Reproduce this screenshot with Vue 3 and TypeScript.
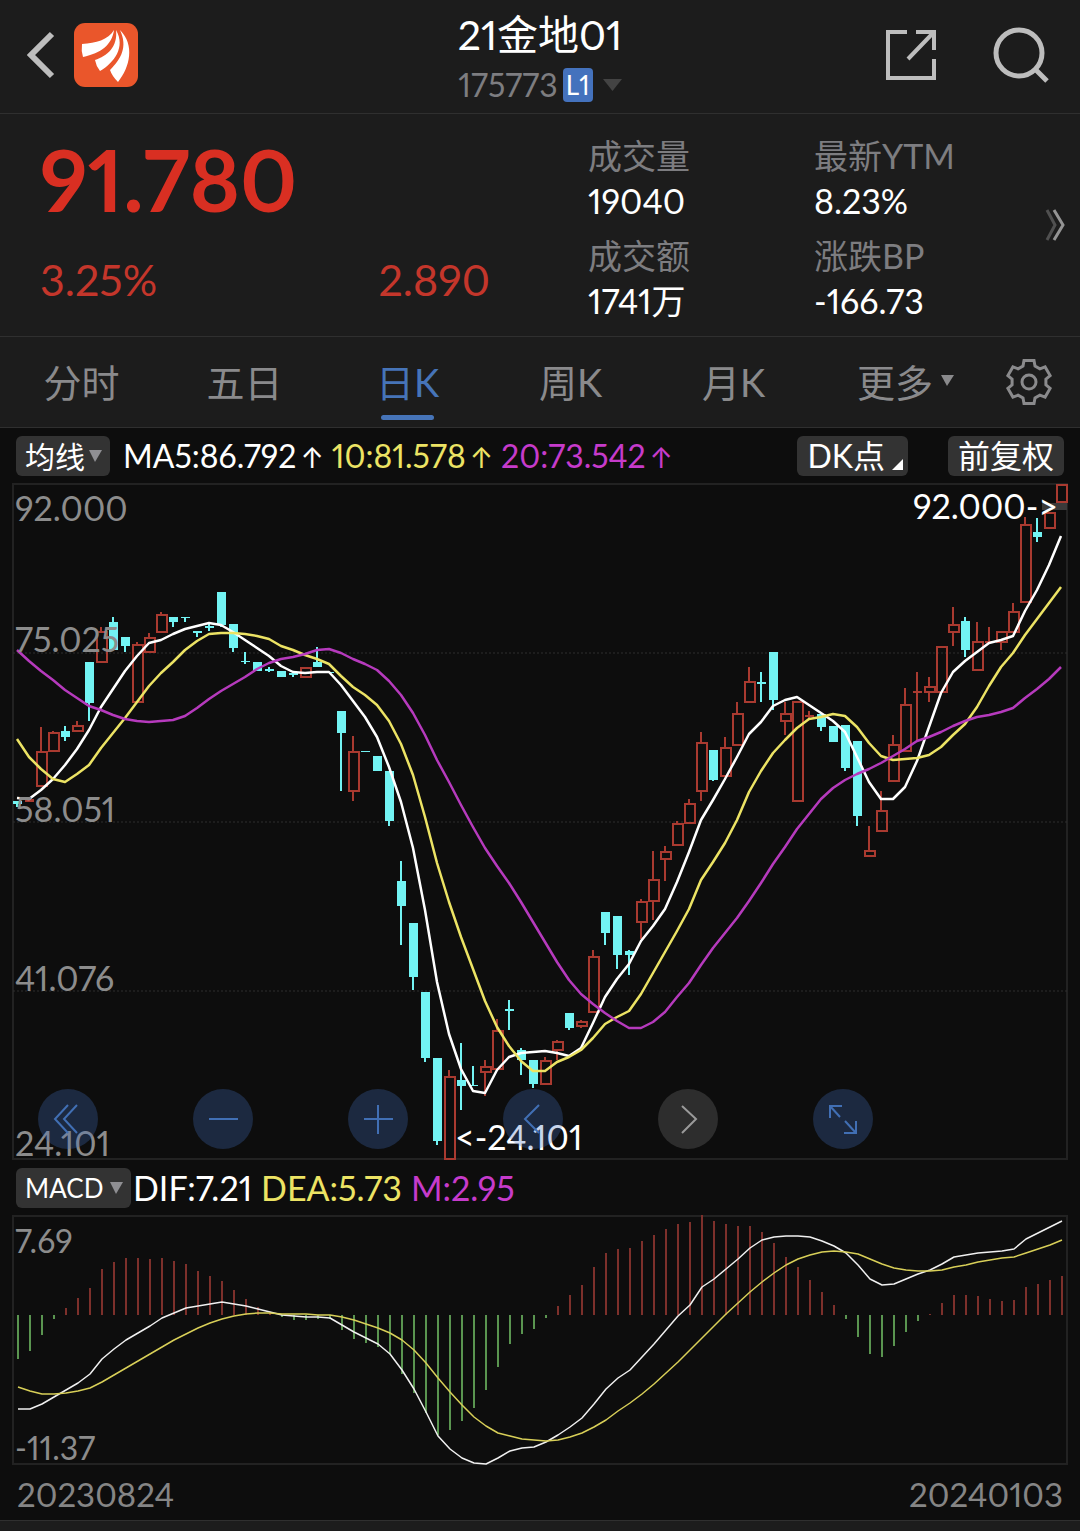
<script setup lang="ts">
import { ref } from 'vue'

// One candle: colour, body top, body bottom, wick top, wick bottom
type Candle = [kind: 'u' | 'd', top: number, bottom: number, high: number, low: number]

const periods = ['分时', '五日', '日K', '周K', '月K']
const activePeriod = ref('日K')
const average = ref('均线')
const indicator = ref('MACD')

const stats = [
  { label: '成交量', value: '19040' },
  { label: '最新YTM', value: '8.23%' },
  { label: '成交额', value: '1741万' },
  { label: '涨跌BP', value: '-166.73' },
]

const candles: Candle[] = [
  ['d', 801, 804, 801, 807], ['u', 799, 802, 799, 802], ['u', 751, 787, 727, 787], ['u', 732, 752, 731, 752],
  ['d', 731, 737, 726, 741], ['u', 725, 732, 721, 732], ['d', 662, 703, 662, 721], ['u', 631, 663, 627, 663],
  ['d', 622, 650, 617, 650], ['d', 637, 646, 637, 652], ['u', 644, 703, 642, 703], ['u', 637, 653, 633, 653],
  ['u', 614, 633, 612, 633], ['d', 617, 622, 617, 627], ['d', 617, 618, 617, 622], ['d', 631, 633, 631, 637],
  ['d', 626, 628, 624, 631], ['d', 592, 625, 592, 627], ['d', 624, 648, 624, 652], ['d', 661, 662, 652, 664],
  ['d', 662, 671, 662, 671], ['d', 669, 671, 667, 672], ['d', 671, 677, 671, 677], ['d', 673, 675, 673, 677],
  ['u', 667, 678, 667, 678], ['d', 662, 667, 647, 667], ['d', 672, 673, 672, 673], ['d', 711, 733, 711, 791],
  ['u', 751, 792, 736, 801], ['d', 751, 752, 751, 752], ['d', 756, 771, 756, 771], ['d', 771, 821, 771, 826],
  ['d', 881, 906, 861, 945], ['d', 923, 977, 923, 990], ['d', 992, 1058, 992, 1062], ['d', 1058, 1141, 1058, 1145],
  ['u', 1076, 1160, 1070, 1160], ['d', 1080, 1086, 1043, 1110], ['d', 1085, 1086, 1066, 1086], ['u', 1066, 1073, 1060, 1096],
  ['u', 1030, 1070, 1019, 1070], ['d', 1009, 1011, 1000, 1030], ['d', 1050, 1060, 1048, 1075], ['d', 1060, 1084, 1060, 1088],
  ['u', 1060, 1085, 1057, 1085], ['u', 1041, 1051, 1040, 1060], ['d', 1013, 1028, 1013, 1030], ['u', 1021, 1027, 1020, 1028],
  ['u', 956, 1013, 950, 1013], ['d', 912, 933, 912, 945], ['d', 916, 955, 916, 969], ['d', 951, 955, 950, 975],
  ['u', 901, 923, 899, 939], ['u', 879, 902, 851, 920], ['u', 851, 860, 846, 881], ['u', 823, 846, 821, 846],
  ['u', 803, 824, 799, 824], ['u', 742, 792, 732, 801], ['d', 750, 780, 750, 781], ['u', 747, 777, 737, 777],
  ['u', 713, 746, 702, 746], ['u', 681, 703, 667, 703], ['d', 682, 684, 672, 702], ['d', 652, 700, 652, 710],
  ['u', 713, 722, 702, 735], ['u', 701, 802, 701, 802], ['u', 715, 717, 711, 719], ['d', 714, 727, 714, 731],
  ['d', 726, 742, 726, 742], ['d', 725, 768, 725, 771], ['d', 741, 816, 741, 826], ['u', 850, 857, 826, 857],
  ['u', 810, 832, 791, 832], ['u', 744, 782, 735, 782], ['u', 704, 752, 688, 752], ['u', 691, 693, 672, 741],
  ['u', 686, 693, 677, 702], ['u', 646, 693, 646, 693], ['u', 624, 633, 607, 646], ['d', 621, 650, 617, 657],
  ['u', 641, 671, 622, 671], ['u', 641, 643, 627, 643], ['u', 631, 643, 631, 650], ['u', 611, 633, 603, 633],
  ['u', 524, 603, 517, 603], ['d', 532, 537, 518, 542], ['u', 512, 529, 512, 529], ['u', 484, 503, 484, 503],
]

const ma5 = [
  798, 799, 790, 779, 765, 749, 730, 707, 689, 671, 656, 643, 640, 634, 629, 626, 623, 625, 632, 640, 648, 656,
  666, 672, 673, 672, 672, 685, 701, 717, 737, 767, 802, 848, 910, 982, 1034, 1069, 1091, 1093, 1070, 1057, 1053,
  1052, 1051, 1053, 1056, 1048, 1023, 997, 979, 964, 941, 926, 909, 882, 852, 820, 800, 779, 757, 734, 722, 706,
  700, 697, 705, 713, 721, 732, 757, 782, 799, 799, 787, 761, 727, 693, 672, 661, 652, 643, 640, 636, 611, 590,
  565, 536,
]
const ma10 = [
  739, 757, 769, 779, 782, 774, 765, 748, 733, 718, 702, 686, 673, 662, 650, 641, 634, 633, 633, 634, 636, 639,
  646, 650, 655, 659, 664, 676, 687, 695, 705, 721, 744, 775, 817, 863, 902, 937, 969, 1001, 1027, 1046, 1061,
  1071, 1071, 1062, 1057, 1050, 1038, 1024, 1017, 1011, 994, 973, 952, 931, 909, 880, 862, 843, 820, 792, 771,
  753, 740, 728, 719, 717, 714, 716, 727, 743, 756, 760, 759, 758, 755, 747, 735, 724, 707, 686, 667, 653, 635,
  619, 603, 587,
]
const ma20 = [
  650, 661, 671, 680, 690, 698, 706, 710, 715, 719, 721, 722, 721, 720, 716, 708, 699, 691, 684, 677, 669, 663,
  659, 657, 654, 650, 649, 653, 659, 664, 670, 681, 695, 713, 735, 760, 782, 805, 827, 848, 866, 883, 902, 922,
  942, 962, 980, 994, 1004, 1013, 1021, 1028, 1028, 1022, 1012, 997, 983, 965, 948, 933, 918, 901, 883, 864, 847,
  829, 814, 799, 788, 780, 774, 769, 763, 756, 749, 741, 737, 732, 726, 721, 717, 715, 712, 708, 698, 689, 679,
  667,
]

const zero = 1315
const bars = [
  1359, 1351, 1335, 1319, 1308, 1298, 1288, 1269, 1262, 1258, 1258, 1259, 1258, 1261, 1264, 1271, 1276, 1281,
  1290, 1299, 1307, 1312, 1317, 1320, 1320, 1319, 1319, 1330, 1339, 1343, 1347, 1354, 1374, 1393, 1413, 1435,
  1430, 1421, 1408, 1390, 1367, 1344, 1334, 1329, 1318, 1306, 1295, 1285, 1267, 1253, 1249, 1248, 1241, 1235,
  1229, 1224, 1222, 1215, 1221, 1224, 1226, 1226, 1232, 1243, 1257, 1267, 1280, 1292, 1305, 1319, 1337, 1354,
  1357, 1346, 1332, 1321, 1314, 1303, 1295, 1295, 1296, 1299, 1301, 1300, 1287, 1284, 1280, 1276,
]
const dif = [
  1409, 1409, 1404, 1397, 1390, 1383, 1374, 1359, 1349, 1340, 1333, 1326, 1318, 1313, 1308, 1306, 1304, 1302,
  1304, 1306, 1309, 1312, 1315, 1316, 1317, 1317, 1318, 1325, 1332, 1338, 1344, 1354, 1370, 1389, 1412, 1436,
  1449, 1458, 1463, 1464, 1458, 1451, 1448, 1447, 1442, 1435, 1427, 1418, 1404, 1389, 1378, 1370, 1357, 1344,
  1330, 1316, 1305, 1287, 1279, 1269, 1259, 1248, 1240, 1237, 1236, 1236, 1237, 1241, 1246, 1253, 1265, 1279,
  1285, 1284, 1279, 1274, 1270, 1264, 1257, 1255, 1253, 1252, 1251, 1249, 1239, 1233, 1227, 1221,
]
const dea = [
  1387, 1391, 1394, 1394, 1393, 1391, 1388, 1382, 1375, 1368, 1361, 1354, 1347, 1340, 1334, 1328, 1323, 1319,
  1316, 1314, 1313, 1313, 1314, 1314, 1314, 1315, 1315, 1317, 1320, 1324, 1328, 1333, 1340, 1350, 1363, 1378,
  1392, 1405, 1417, 1426, 1433, 1436, 1439, 1440, 1441, 1440, 1437, 1433, 1427, 1420, 1411, 1403, 1394, 1384,
  1373, 1362, 1350, 1338, 1326, 1314, 1303, 1292, 1282, 1273, 1265, 1259, 1255, 1252, 1251, 1252, 1254, 1259,
  1264, 1268, 1270, 1271, 1271, 1270, 1267, 1265, 1262, 1260, 1258, 1257, 1253, 1249, 1245, 1240,
]

const xAt = (i: number): number => 18 + i * 12
const wickAt = (i: number): number => xAt(i) - 1
const polyline = (ys: number[], at: (i: number) => number): string =>
  ys.map((y, i) => `${at(i)},${y}`).join(' ')

const priceLabels = [
  { text: '92.000', y: 521 },
  { text: '75.025', y: 652 },
  { text: '58.051', y: 822 },
  { text: '41.076', y: 991 },
  { text: '24.101', y: 1156 },
]

const tools = [
  { name: '最早', icon: 'M30 16 17 30 30 44M39 16 26 30 39 44' },
  { name: '缩小', icon: 'M16 30H45' },
  { name: '放大', icon: 'M16 30H45M30 16V45' },
  { name: '向左', icon: 'M36 16 22 30 36 44' },
  { name: '向右', icon: 'M24 17 38 30 24 44', muted: true },
  { name: '全屏', icon: 'M17 29V17H29M17 17 27 28M43 32V44H31M43 44 32 32' },
]
</script>

<template>
  <main class="app">
    <header class="top">
      <div class="brand">
        <button class="icon" aria-label="返回">
          <svg width="28" height="48" viewBox="0 0 28 48"><path d="M25 3 4 24 25 45" fill="none" stroke="#bdbdbd" stroke-width="6" /></svg>
        </button>
        <svg width="64" height="64" viewBox="0 0 64 64">
          <rect width="64" height="64" rx="11" fill="#ea562b" />
          <g fill="#fff">
            <path d="M40 7C34 17 22 20 8 21Q7 28 9 34C27 30 38 22 40 7Z" />
            <path d="M42 7C44 24 33 33 21 37Q22 43 26 48C40 40 52 24 42 7Z" />
            <path d="M46 7C54 24 47 36 36 47Q38 53 44 59C56 44 61 22 46 7Z" />
          </g>
        </svg>
      </div>
      <div class="title">
        <h1>21金地01</h1>
        <button class="code">
          <span>175773</span><span class="level">L1</span>
          <svg width="19" height="12" viewBox="0 0 19 12"><path d="M0 0H19L9.500 12Z" fill="#434343" /></svg>
        </button>
      </div>
      <div class="actions">
        <button class="icon" aria-label="分享">
          <svg width="52" height="52" viewBox="0 0 52 52">
            <path d="M22 3H3V49H49V30M31 3H49V21M49 3 23 30" fill="none" stroke="#bdbdbd" stroke-width="4" />
          </svg>
        </button>
        <button class="icon" aria-label="搜索">
          <svg width="58" height="58" viewBox="0 0 58 58">
            <circle cx="27" cy="27" r="23" fill="none" stroke="#bdbdbd" stroke-width="5" />
            <path d="M43 43 55 55" stroke="#bdbdbd" stroke-width="5" />
          </svg>
        </button>
      </div>
    </header>

    <section class="quote">
      <div class="price">
        <strong>91.780</strong>
        <div class="change"><span>3.25%</span><span>2.890</span></div>
      </div>
      <dl class="stats">
        <div v-for="s in stats" :key="s.label">
          <dt>{{ s.label }}</dt>
          <dd>{{ s.value }}</dd>
        </div>
      </dl>
      <button class="icon more" aria-label="更多行情">
        <svg width="20" height="32" viewBox="0 0 20 32" fill="none" stroke-width="3">
          <path d="M2 1 10 16 2 31" stroke="#505050" /><path d="M9 1 18 16 9 31" stroke="#949494" />
        </svg>
      </button>
    </section>

    <nav class="tabs">
      <button
        v-for="p in periods"
        :key="p"
        :class="{ active: p === activePeriod }"
        @click="activePeriod = p"
      >{{ p }}</button>
      <button class="others">
        更多<svg width="13" height="11" viewBox="0 0 13 11"><path d="M0 0H13L6 11Z" fill="#8a8a8c" /></svg>
      </button>
      <button class="gear" aria-label="设置">
        <svg width="48" height="48" viewBox="-24 -24 48 48" fill="none" stroke="#8a8a8c" stroke-width="3">
          <path d="M-5-21.500H5L6-16 10.900-13.200 16.100-15.100 21.100-6.400 16.900-2.800V2.800L21.100 6.400 16.100 15.100 10.900 13.200 6 16 5 21.500H-5L-6 16-10.900 13.200-16.100 15.100-21.100 6.400-16.900 2.800V-2.800L-21.100-6.400-16.100-15.100-10.900-13.200-6-16Z" />
          <circle r="7" />
        </svg>
      </button>
    </nav>

    <section class="board">
      <div class="bar">
        <label class="chip">
          <select v-model="average" aria-label="主图指标"><option>均线</option></select>
          <svg width="13" height="12" viewBox="0 0 13 12"><path d="M0 0H13L6 12Z" fill="#8f8f93" /></svg>
        </label>
        <p class="legend averages">
          <span class="white">MA5:86.792<i>↑</i></span>
          <span class="yellow">10:81.578<i>↑</i></span>
          <span class="pink">20:73.542<i>↑</i></span>
        </p>
        <button class="chip dk">DK点<svg width="11" height="11" viewBox="0 0 11 11"><path d="M11 0V11H0Z" fill="#fff" /></svg></button>
        <button class="chip">前复权</button>
      </div>

      <div class="chart">
        <svg viewBox="12 483 1056 677" role="img" aria-label="日K线">
          <rect x="13" y="484" width="1054" height="675" fill="none" stroke="#222" stroke-width="2" />
          <path d="M13 653H1067M13 822H1067M13 991H1067" stroke="#2e2e2e" stroke-width="1" stroke-dasharray="2 2" />
          <rect x="1042" y="503" width="25" height="7" fill="#3a3a3a" />
          <g v-for="([kind, top, bottom, high, low], i) in candles" :key="i" :class="kind">
            <template v-if="kind === 'u' && bottom - top > 3">
              <path :d="`M${wickAt(i)} ${high}V${top}M${wickAt(i)} ${bottom}V${low}`" />
              <rect :x="xAt(i) - 5" :y="top + 1" width="10" :height="bottom - top - 2" />
            </template>
            <template v-else>
              <path :d="`M${wickAt(i)} ${high}V${low}`" />
              <rect class="solid" :x="xAt(i) - 5" :y="top" width="9" :height="bottom - top" />
            </template>
          </g>
          <g fill="none" stroke-width="2.500" stroke-linejoin="round">
            <polyline :points="polyline(ma5, wickAt)" stroke="#fff" />
            <polyline :points="polyline(ma10, wickAt)" stroke="#ece364" />
            <polyline :points="polyline(ma20, wickAt)" stroke="#b63abd" />
          </g>
          <g class="axis">
            <text v-for="l in priceLabels" :key="l.text" x="15" :y="l.y">{{ l.text }}</text>
          </g>
          <g class="mark">
            <text x="1058" y="519" text-anchor="end">92.000-&gt;</text>
            <text x="455" y="1150">&lt;-24.101</text>
          </g>
        </svg>
        <div class="tools">
          <button v-for="t in tools" :key="t.name" :class="{ muted: t.muted }" :aria-label="t.name">
            <svg width="60" height="60" viewBox="0 0 60 60"><path :d="t.icon" /></svg>
          </button>
        </div>
      </div>

      <div class="bar">
        <label class="chip small">
          <select v-model="indicator" aria-label="副图指标"><option>MACD</option></select>
          <svg width="13" height="12" viewBox="0 0 13 12"><path d="M0 0H13L6 12Z" fill="#8f8f93" /></svg>
        </label>
        <p class="legend macd">
          <span class="white">DIF:7.21</span>
          <span class="yellow">DEA:5.73</span>
          <span class="pink">M:2.95</span>
        </p>
      </div>

      <div class="chart">
        <svg viewBox="12 1215 1056 250" role="img" aria-label="MACD">
          <rect x="13" y="1216" width="1054" height="248" fill="none" stroke="#222" stroke-width="2" />
          <path
            v-for="(y, i) in bars"
            :key="i"
            :d="`M${xAt(i)} ${zero}V${y}`"
            :stroke="y < zero ? '#7d302b' : '#5a9550'"
            stroke-width="2"
          />
          <g fill="none" stroke-width="1.500" stroke-linejoin="round">
            <polyline :points="polyline(dif, xAt)" stroke="#f0f0f0" />
            <polyline :points="polyline(dea, xAt)" stroke="#d8cf58" />
          </g>
          <g class="axis low">
            <text x="15" y="1253">7.69</text>
            <text x="15" y="1460">-11.37</text>
          </g>
        </svg>
      </div>

      <div class="dates"><time>20230824</time><time>20240103</time></div>
    </section>
  </main>
</template>

<style>
body {
  margin: 0;
  background: #1c1c1c;
}
</style>

<style scoped>
.app {
  font-family: Lato, "Noto Sans CJK SC", sans-serif;
  font-variant-numeric: proportional-nums;
  font-size: 34px;
  color: #fff;
  background: #1c1c1c;
  padding-bottom: 10px;
}
button,
select {
  font: inherit;
  color: inherit;
  background: none;
  border: 0;
  padding: 0;
  margin: 0;
}
svg {
  display: block;
  flex: none;
}
.icon {
  display: flex;
}
.top {
  display: grid;
  grid-template-columns: 1fr auto 1fr;
  height: 113px;
  border-bottom: 1px solid #2f2f2f;
}
.brand,
.actions {
  display: flex;
  align-items: center;
  height: 110px;
}
.brand {
  padding-left: 27px;
  gap: 19px;
}
.actions {
  justify-content: flex-end;
  gap: 55px;
  padding-right: 30px;
}
.title {
  display: flex;
  flex-direction: column;
  align-items: center;
  padding-top: 9px;
}
h1 {
  margin: 0;
  font-size: 41px;
  line-height: 52px;
  font-weight: 400;
}
.code {
  display: flex;
  align-items: center;
  gap: 5px;
  height: 47px;
  font-size: 32px;
  color: #7d7d80;
}
.level {
  width: 30px;
  border-radius: 4px;
  background: #4472bd;
  color: #fff;
  font-size: 26px;
  line-height: 34px;
}
.code svg {
  margin-left: 5px;
}
.quote {
  display: flex;
  height: 222px;
  border-bottom: 1px solid #2f2f2f;
}
.price {
  width: 450px;
  padding: 18px 98px 0 40px;
  color: #d92f22;
}
.price strong {
  display: block;
  font-size: 86px;
  line-height: 94px;
  font-weight: 700;
}
.change {
  display: flex;
  justify-content: space-between;
  margin-top: 27px;
  font-size: 43px;
  line-height: 54px;
  color: #c4362b;
}
.stats {
  flex: 1;
  display: grid;
  grid-template-columns: 226px 1fr;
  row-gap: 10px;
  align-content: start;
  margin: 0;
  padding-top: 19px;
}
dt,
dd {
  margin: 0;
  line-height: 45px;
}
dt {
  color: #7d7d80;
}
.more {
  align-items: center;
  padding-right: 15px;
}
.tabs {
  display: grid;
  grid-template-columns: repeat(6, 1fr) 102px;
  height: 90px;
  border-bottom: 1px solid #2f2f2f;
  font-size: 38px;
  color: #8a8a8c;
}
.tabs button {
  display: flex;
  align-items: center;
  justify-content: center;
  position: relative;
  padding-bottom: 3px;
}
.tabs .active {
  color: #4674b8;
}
.tabs .active::after {
  content: "";
  position: absolute;
  bottom: 7px;
  width: 53px;
  height: 5px;
  border-radius: 3px;
  background: #4674b8;
}
.tabs .others {
  gap: 8px;
  padding-left: 18px;
}
.tabs .gear {
  padding-bottom: 0;
}
.board {
  background: #0d0d0d;
  border-bottom: 1px solid #2f2f2f;
}
.bar {
  display: flex;
  align-items: center;
  height: 55px;
  padding: 0 16px;
}
.chip {
  position: relative;
  display: flex;
  align-items: center;
  height: 40px;
  padding: 0 10px;
  border-radius: 6px;
  background: #333;
  font-size: 32px;
  line-height: 40px;
}
.chip select {
  appearance: none;
  width: 76px;
  height: 40px;
  font-size: 30px;
  outline: none;
}
.chip.small select {
  width: 97px;
  font-size: 26px;
}
label.chip {
  padding: 0 0 0 9px;
  width: 85px;
}
label.chip.small {
  width: 106px;
}
label.chip svg {
  position: absolute;
  right: 8px;
  top: 14px;
}
.dk {
  margin: 0 40px 0 auto;
  padding: 0 5px 0 10px;
  gap: 7px;
}
.dk svg {
  align-self: flex-end;
  margin-bottom: 6px;
}
.legend {
  display: flex;
  margin: 0;
  font-size: 32px;
  line-height: 40px;
}
.averages {
  margin-left: 13px;
  padding-top: 3px;
  gap: 8px;
}
.legend i {
  margin-left: 4px;
  font-family: Inter, sans-serif;
  font-size: 28px;
  font-style: normal;
}
.macd {
  margin-left: 2px;
  gap: 9px;
  font-size: 34px;
}
.white {
  color: #fff;
}
.yellow {
  color: #ece364;
}
.pink {
  color: #c63bcb;
}
.chart {
  position: relative;
  margin: 0 12px;
}
.chart > svg {
  width: 100%;
  overflow: visible;
}
.u path,
.u rect {
  fill: none;
  stroke: #a93a30;
  stroke-width: 2;
}
.u .solid {
  fill: #a93a30;
  stroke: none;
}
.d path {
  stroke: #72f3f3;
  stroke-width: 2;
}
.d rect {
  fill: #72f3f3;
}
.axis {
  font-size: 34px;
  fill: #8c8c8c;
}
.axis.low {
  font-size: 32px;
}
.mark {
  font-size: 34px;
  fill: #fff;
}
.tools {
  position: absolute;
  left: 26px;
  bottom: 11px;
  display: flex;
  gap: 95px;
}
.tools button {
  border-radius: 50%;
  background: rgba(65, 110, 189, 0.29);
}
.tools path {
  fill: none;
  stroke: #416fb4;
  stroke-width: 2;
}
.tools .muted {
  background: rgba(150, 150, 150, 0.23);
}
.tools .muted path {
  stroke: #9a9a9a;
}
.dates {
  display: flex;
  justify-content: space-between;
  padding: 3px 17px 0;
  font-size: 33px;
  line-height: 52px;
  color: #858585;
}
</style>
